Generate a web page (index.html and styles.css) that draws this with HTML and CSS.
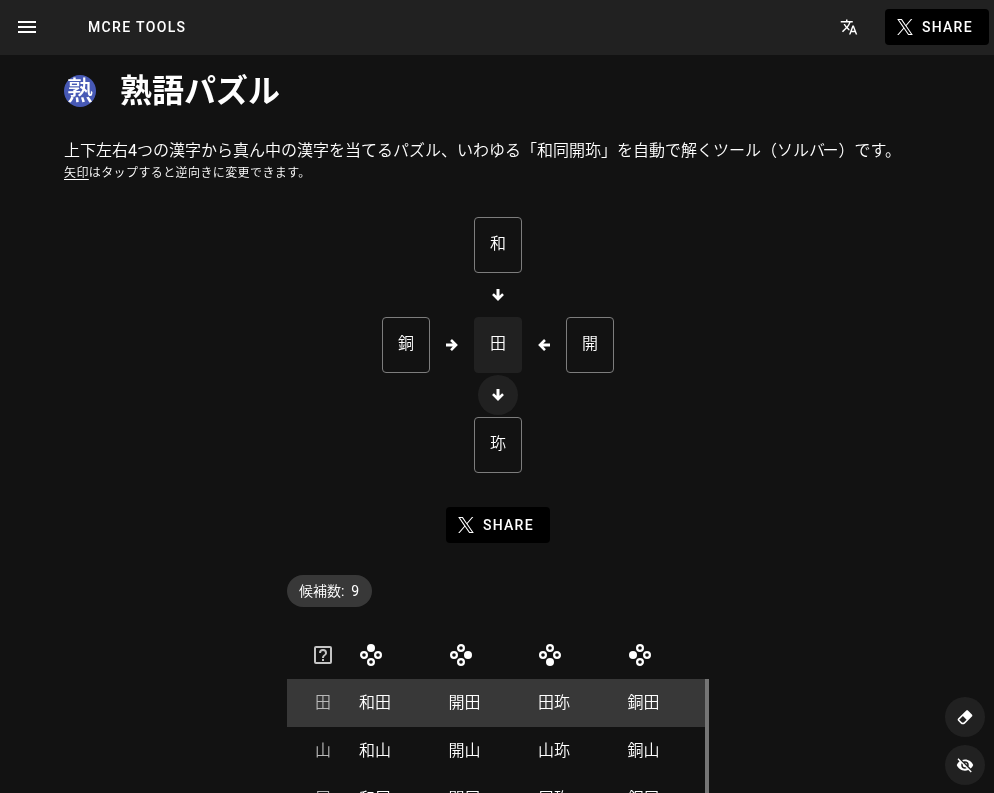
FILE: index.html
```html
<!DOCTYPE html>
<html lang="ja">
<head>
<meta charset="utf-8">
<title>熟語パズル</title>
<link rel="stylesheet" href="styles.css">
</head>
<body>
<svg class="defs" width="0" height="0" aria-hidden="true">
  <symbol id="x" viewBox="0 0 1200 1227"><path d="M714.163 519.284L1160.89 0H1055.03L667.137 450.887L357.328 0H0L468.492 681.821L0 1226.37H105.866L515.491 750.218L842.672 1226.37H1200L714.137 519.284H714.163ZM569.165 687.828L521.697 619.934L144.011 79.6944H306.615L611.412 515.685L658.88 583.579L1055.08 1150.3H892.476L569.165 687.854V687.828Z"/></symbol>
  <symbol id="arrow" viewBox="0 0 24 24"><path d="M10,4H14V13L17.5,9.5L19.92,11.92L12,19.84L4.08,11.92L6.5,9.5L10,13V4Z"/></symbol>
  <symbol id="dots" viewBox="0 0 24 24"><circle cx="12" cy="5" r="4" stroke="none"/><g fill="none" stroke="currentColor" stroke-width="2.2"><circle cx="19" cy="12" r="2.9"/><circle cx="12" cy="19" r="2.9"/><circle cx="5" cy="12" r="2.9"/></g></symbol>
</svg>
<header class="bar">
  <svg class="menu" viewBox="0 0 24 24"><path d="M3,6H21V8H3V6M3,11H21V13H3V11M3,16H21V18H3V16Z"/></svg>
  <span class="brand">MCRE TOOLS</span>
  <svg class="lang" viewBox="0 0 24 24"><path d="M12.87,15.07L10.33,12.56L10.36,12.53C12.1,10.59 13.34,8.36 14.07,6H17V4H10V2H8V4H1V6H12.17C11.5,7.92 10.44,9.75 9,11.35C8.07,10.32 7.3,9.19 6.69,8H4.69C5.42,9.63 6.42,11.17 7.67,12.56L2.58,17.58L4,19L9,14L12.11,17.11L12.87,15.07M18.5,10H16.5L12,22H14L15.12,19H19.87L21,22H23L18.5,10M15.88,17L17.5,12.67L19.12,17H15.88Z"/></svg>
  <a class="share"><svg><use href="#x"/></svg>SHARE</a>
</header>
<main>
  <h1><span class="emblem">熟</span>熟語パズル</h1>
  <p class="lead">上下左右<span class="num">4</span>つの漢字から真ん中の漢字を当てるパズル、いわゆる「和同開珎」を自動で解くツール（ソル<span class="tight">バ</span>ー）です<span class="tight-end">。</span></p>
  <p class="note"><u>矢印</u>はタップすると逆向きに変更できます<span class="tight-end">。</span></p>
  <section class="puzzle">
    <div class="box top">和</div>
    <div class="arrow a-top"><svg><use href="#arrow"/></svg></div>
    <div class="box left">銅</div>
    <div class="arrow a-left"><svg><use href="#arrow"/></svg></div>
    <div class="box center">田</div>
    <div class="arrow a-right"><svg><use href="#arrow"/></svg></div>
    <div class="box right">開</div>
    <div class="arrow a-bottom"><svg><use href="#arrow"/></svg></div>
    <div class="box bottom">珎</div>
  </section>
  <a class="share main-share"><svg><use href="#x"/></svg>SHARE</a>
  <section class="results">
    <span class="chip">候補数<span class="num">:&nbsp; 9</span></span>
    <div class="row head">
      <span><svg class="help" viewBox="0 0 24 24"><rect x="4" y="4" width="16" height="16" rx="1" fill="none" stroke="currentColor" stroke-width="2"/><path d="M11 18h2v-2h-2v2m1-12a4 4 0 0 0-4 4h2a2 2 0 0 1 2-2 2 2 0 0 1 2 2c0 2-3 1.75-3 5h2c0-2.25 3-2.5 3-5a4 4 0 0 0-4-4z"/></svg></span>
      <span><svg class="dots"><use href="#dots"/></svg></span>
      <span><svg class="dots east"><use href="#dots"/></svg></span>
      <span><svg class="dots south"><use href="#dots"/></svg></span>
      <span><svg class="dots west"><use href="#dots"/></svg></span>
    </div>
    <div class="list">
      <div class="row active"><span>田</span><span>和田</span><span>開田</span><span>田珎</span><span>銅田</span></div>
      <div class="row"><span>山</span><span>和山</span><span>開山</span><span>山珎</span><span>銅山</span></div>
      <div class="row"><span>尾</span><span>和尾</span><span>開尾</span><span>尾珎</span><span>銅尾</span></div>
    </div>
  </section>
</main>
<nav class="fabs">
  <button><svg viewBox="0 0 24 24"><path d="M16.24,3.56L21.19,8.5C21.97,9.29 21.97,10.55 21.19,11.34L12,20.53C10.44,22.09 7.91,22.09 6.34,20.53L2.81,17C2.03,16.21 2.03,14.95 2.81,14.16L13.41,3.56C14.2,2.78 15.46,2.78 16.24,3.56M4.22,15.58L7.76,19.11C8.54,19.9 9.8,19.9 10.59,19.11L14.12,15.58L9.17,10.63L4.22,15.58Z"/></svg></button>
  <button><svg viewBox="0 0 24 24"><path d="M11.83,9L15,12.16C15,12.11 15,12.05 15,12A3,3 0 0,0 12,9C11.94,9 11.89,9 11.83,9M7.53,9.8L9.08,11.35C9.03,11.56 9,11.77 9,12A3,3 0 0,0 12,15C12.22,15 12.44,14.97 12.65,14.92L14.2,16.47C13.53,16.8 12.79,17 12,17A5,5 0 0,1 7,12C7,11.21 7.2,10.47 7.53,9.8M2,4.27L4.28,6.55L4.73,7C3.08,8.3 1.78,10 1,12C2.73,16.39 7,19.5 12,19.5C13.55,19.5 15.03,19.2 16.38,18.66L16.81,19.08L19.73,22L21,20.73L3.27,3M12,7A5,5 0 0,1 17,12C17,12.64 16.87,13.26 16.64,13.82L19.57,16.75C21.07,15.5 22.27,13.86 23,12C21.27,7.61 17,4.5 12,4.5C10.6,4.5 9.26,4.75 8,5.2L10.17,7.35C10.74,7.13 11.35,7 12,7Z"/></svg></button>
</nav>
</body>
</html>
```
FILE: styles.css
```css
* { box-sizing: border-box; }
html, body { height: 100%; }
body {
  margin: 0;
  overflow: hidden;
  background: #121212;
  color: #fff;
  font: 350 16px/24px Roboto, "Noto Sans CJK JP", sans-serif;
}
svg { display: block; fill: currentColor; }
.defs { position: absolute; }
.bar, main { will-change: transform; }
.bar {
  display: flex;
  align-items: center;
  height: 55px;
  padding: 0 5px 1px 15px;
  background: #212121;
}
.menu { width: 24px; height: 24px; }
.brand { margin-left: 49px; font-size: 14px; font-weight: 500; letter-spacing: 1.35px; }
.lang { width: 18px; height: 18px; margin-left: auto; }
.share {
  display: flex;
  align-items: center;
  width: 104px;
  height: 36px;
  padding-left: 12px;
  border-radius: 4px;
  background: #000;
  font-size: 14px;
  font-weight: 500;
  letter-spacing: 1.25px;
}
.share svg { width: 16px; height: 16px; margin-right: 9px; }
.bar .share { margin-left: 27px; }
main { padding: 12px 62px 0 64px; }
h1 { display: flex; align-items: center; height: 48px; margin: 0; font-size: 32px; font-weight: 700; line-height: 48px; }
.emblem {
  width: 32px;
  height: 32px;
  margin-right: 24px;
  border-radius: 50%;
  background: #4759b5;
  font-size: 26px;
  font-weight: 500;
  line-height: 32px;
  text-indent: 3px;
}
p { margin: 0; }
.num { font-weight: 400; }
.lead { margin-top: 24px; white-space: nowrap; }
.tight { letter-spacing: -2.5px; }
.tight-end { margin-left: -1.5px; }
.note { font-size: 12px; line-height: 20px; letter-spacing: .4px; }
u { text-underline-offset: 2px; }
.puzzle {
  display: grid;
  grid-template: ". . top . ." 56px ". . at . ." 44px "left al center ar right" 56px ". . ab . ." 44px ". . bottom . ." 56px / 48px 44px 48px 44px 48px;
  width: 232px;
  margin: 34px auto 0;
}
.box { border: 1px solid #7d7d7d; border-radius: 4px; line-height: 52px; text-align: center; }
.top { grid-area: top; }
.left { grid-area: left; }
.center { grid-area: center; border-color: #212121; background: #212121; }
.right { grid-area: right; }
.bottom { grid-area: bottom; }
.arrow { display: grid; place-items: center; place-self: center; width: 40px; height: 40px; border-radius: 50%; }
.arrow svg { width: 18px; height: 18px; }
.a-top { grid-area: at; }
.a-left { grid-area: al; transform: rotate(-90deg); }
.a-right { grid-area: ar; transform: rotate(90deg); }
.a-bottom { grid-area: ab; background: #212121; }
.main-share { margin: 34px auto 0; }
.results { width: 422px; margin: 32px auto 0; }
.chip { display: block; width: 85px; height: 32px; padding-left: 12px; border-radius: 16px; background: #383838; font-size: 14px; line-height: 32px; white-space: nowrap; }
.row { display: grid; grid-template-columns: 72px repeat(4, 89.5px); height: 48px; line-height: 47px; overflow: hidden; }
.row span:first-child { padding-left: 28px; color: #b8b8b8; }
.head { margin-top: 24px; align-items: center; }
.help { width: 24px; height: 24px; margin-left: -4px; color: #c4c4c4; }
.dots { width: 24px; height: 24px; }
.east { transform: rotate(90deg); }
.south { transform: rotate(180deg); }
.west { transform: rotate(270deg); }
.list { border-right: 4px solid #757575; height: 240px; }
.active { background: #383838; }
.fabs { position: fixed; right: 9px; bottom: 8px; display: grid; gap: 8px; }
.fabs button { display: grid; place-items: center; width: 40px; height: 40px; padding: 0; border: 0; border-radius: 50%; background: #212121; color: #fff; }
.fabs svg { width: 18px; height: 18px; }
```
